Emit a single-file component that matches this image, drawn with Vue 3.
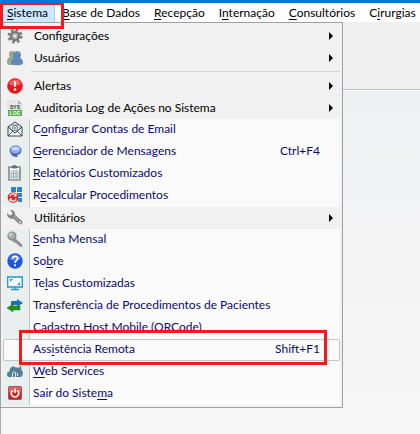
<template>
  <div class="page">
    <nav class="menubar">
      <div v-for="m in menus" :key="m.post" class="top" :class="{ open: m.open }">
        <button type="button">{{ m.pre }}<u>{{ m.key }}</u>{{ m.post }}</button>
        <span v-if="m.open" class="mark"></span>
      </div>
    </nav>

    <div class="toolbar"></div>
    <main class="workspace"></main>

    <div class="menu" role="menu">
      <template v-for="(item, i) in items" :key="i">
        <div v-if="item.sep" class="sep"></div>
        <div v-else class="row" :class="{ group: item.sub, hover: item.hover }">
          <button type="button" role="menuitem">
            <span class="icon">
              <svg v-if="item.icon === 'gear'" viewBox="0 0 16 16">
                <circle cx="8" cy="8" r="6.3" fill="none" stroke="#777" stroke-width="2.4" stroke-dasharray="2.6 2.35" />
                <circle cx="8" cy="8" r="4" fill="#ccc" stroke="#777" stroke-width="2.6" />
                <circle cx="8" cy="8" r="1.6" fill="#f4f4f4" stroke="#999" stroke-width=".6" />
              </svg>
              <svg v-else-if="item.icon === 'users'" viewBox="0 0 16 16">
                <path d="M0 13c0-4 1-5 3-6-2-3-1-6 2-6 3 0 4 3 2 6l2 8H2z" fill="#c88a91" />
                <path d="M1 14c0-4 1-5 3-6-2-3-1-6 2-6h3v13H3z" fill="#7fb58c" />
                <path d="M4 13c0-3 1-4 3-5-2-3-1-7 3-7s5 4 3 7c2 1 3 2 3 5 0 3-12 3-12 0z" fill="#6288b8" />
                <path d="M8 3c1-2 4-1 4 1" fill="none" stroke="#91aed0" />
              </svg>
              <svg v-else-if="item.icon === 'alert'" viewBox="0 0 16 16">
                <circle cx="8" cy="8" r="7.6" fill="#e8161d" stroke="#c9494d" stroke-width=".6" />
                <path d="M2 6c1-6 11-6 12 0-3 2-9 2-12 0z" fill="#ff5a5c" />
                <path d="M6.8 3h2.4l-.5 6H7.3z" fill="#fff" />
                <circle cx="8" cy="11.5" r="1.3" fill="#fff" />
              </svg>
              <svg v-else-if="item.icon === 'log'" viewBox="0 0 16 16">
                <path d="M1 0h10l4 4v6H1z" fill="#e8e8e6" stroke="#ccc" stroke-width=".6" />
                <path d="M11 0v4h4z" fill="#b8b8b8" />
                <path d="M1 10h14v6H1z" fill="#5fae57" />
                <text x="8" y="8.6" text-anchor="middle" font-size="5" font-weight="bold" fill="#333">SYS</text>
                <text x="8" y="15" text-anchor="middle" font-size="5" font-weight="bold" fill="#e9ffe4">LOG</text>
              </svg>
              <svg v-else-if="item.icon === 'mail'" viewBox="0 0 16 16">
                <path d="M1 6l7-5 7 5v9H1z" fill="#f7fafa" stroke="#39434a" />
                <path d="M3 8V4h10v4l-5 4z" fill="#fff" stroke="#58636a" stroke-width=".7" />
                <path d="M1 6l7 6 7-6M1 15l5-5M15 15l-5-5" fill="none" stroke="#39434a" stroke-width=".9" />
                <circle cx="8" cy="7" r="2.6" fill="none" stroke="#3c6f91" />
                <circle cx="8" cy="7" r=".9" fill="#3c6f91" />
              </svg>
              <svg v-else-if="item.icon === 'chat'" viewBox="0 0 16 16">
                <path d="M9 11l2 3c-4 0-6-1-7-3z" fill="#414fae" />
                <ellipse cx="8.5" cy="7.5" rx="6" ry="5" fill="#5068c8" />
                <ellipse cx="8.5" cy="7" rx="5" ry="3.6" fill="#8fa9ec" />
                <ellipse cx="8.5" cy="5.5" rx="4" ry="2" fill="#c8d8fc" />
              </svg>
              <svg v-else-if="item.icon === 'report'" viewBox="0 0 16 16">
                <path d="M2 2h11v13H2z" fill="#fff" stroke="#59636b" stroke-width="1.2" />
                <path d="M5 3V1.5h1.5c0-2 2-2 2 0H10V3z" fill="#777" stroke="#4d555c" stroke-width=".7" />
                <path d="M4 6h7v7H4zM4 8.5h7M4 11h7M6.5 6v7M9 6v7" fill="none" stroke="#8e9aa3" stroke-width=".8" />
              </svg>
              <svg v-else-if="item.icon === 'recalc'" viewBox="0 0 16 16">
                <path d="M4 0h5v5H4zM10 0h5v5h-5zM10 6h5v4h-5zM11 11h4v4h-4z" fill="#2c84cc" />
                <circle cx="6" cy="10.5" r="5.3" fill="#e0242b" />
                <path d="M3 9.5c.5-3 4-3.5 5.5-1.5M9 11.5c-.5 3-4 3.5-5.5 1.5" fill="none" stroke="#fff" stroke-width="1.3" />
                <path d="M9.5 6.5v3h-3zM2.5 14.5v-3h3z" fill="#fff" />
              </svg>
              <svg v-else-if="item.icon === 'wrench'" viewBox="0 0 16 16">
                <path d="M0 3l3 2.5 2-.8.3-2.2L3 0c3.5-.3 5.5 1.5 5 5l6.5 5.5c2.5 2.5-.5 5.5-3 3L6.5 8.5C3 9.5-.5 7 0 3z" fill="#858585" />
                <path d="M7 6l6 6" stroke="#b9b9b9" />
                <circle cx="13" cy="12.5" r=".9" fill="#eee" />
              </svg>
              <svg v-else-if="item.icon === 'key'" viewBox="0 0 16 16">
                <path d="M7 6l8 7.5.5 2.5-3-.5-1-2-1.5.2-.5-2H8L4 9z" fill="#8d8d8d" />
                <circle cx="5" cy="5" r="4.6" fill="#929292" />
                <circle cx="4.5" cy="4.5" r="3" fill="#b1b1b1" />
                <circle cx="3.5" cy="3.5" r="1" fill="#eee" />
              </svg>
              <svg v-else-if="item.icon === 'help'" viewBox="0 0 16 16">
                <circle cx="8" cy="8" r="7.7" fill="#1f56df" />
                <path d="M2 6c1-6 11-6 12 0-3 2-9 2-12 0z" fill="#4a7bf0" />
                <path d="M5.5 6c0-3.5 5.2-3.2 5.2-.4C10.7 7.5 8 7.5 8 10" fill="none" stroke="#fff" stroke-width="1.7" />
                <circle cx="8" cy="12.3" r="1.1" fill="#fff" />
              </svg>
              <svg v-else-if="item.icon === 'screen'" viewBox="0 0 16 16">
                <path d="M.7 2h14.6v10H.7z" fill="#f4fbfd" stroke="#2596bd" stroke-width="1.3" />
                <path d="M8 12v2M4 14.5h8" stroke="#2596bd" stroke-width="1.3" />
                <path d="M3 4h3L3 7zM13 10h-3l3-3z" fill="#2596bd" />
              </svg>
              <svg v-else-if="item.icon === 'transfer'" viewBox="0 0 16 16">
                <path d="M4 4h6V2l6 4-6 4V8H4z" fill="#1872c4" />
                <path d="M13 9H6V7l-6 4 6 4v-2h7z" fill="#1d9321" stroke="#126b16" stroke-width=".4" />
              </svg>
              <svg v-else-if="item.icon === 'cloud'" viewBox="0 0 16 16">
                <path d="M3 14c-4 0-4-5-.5-5.500C2 4 7 2 9 5c1-1 2-1 3 0l2-3 .5 5c2 2 2 6-1 7z" fill="#557f96" />
                <path d="M5.5 14v-4c0-1.5 3-1.5 3 0v4M10.5 10v3" fill="none" stroke="#dbe8ed" stroke-width="1" />
              </svg>
              <svg v-else-if="item.icon === 'power'" viewBox="0 0 16 16">
                <rect x="1.5" y="1.5" width="13" height="13" rx="1" fill="#c7262b" stroke="#a85357" />
                <path d="M2 2h12v5H2z" fill="#dc6265" />
                <path d="M5.5 5.5c-3 3 0 6.5 2.5 6.5s5.5-3.5 2.5-6.5M8 3.5V8" fill="none" stroke="#fff" stroke-width="1.6" />
              </svg>
            </span>
            <span class="label">{{ item.pre }}<u v-if="item.key">{{ item.key }}</u>{{ item.post }}</span>
            <span v-if="item.shortcut" class="shortcut">{{ item.shortcut }}</span>
            <span v-if="item.sub" class="arrow"></span>
          </button>
          <span v-if="item.hover" class="mark"></span>
        </div>
      </template>
    </div>
  </div>
</template>

<script setup>
const menus = [
  { pre: "", key: "S", post: "istema", open: true },
  { pre: "", key: "B", post: "ase de Dados" },
  { pre: "", key: "R", post: "ecepção" },
  { pre: "I", key: "n", post: "ternação" },
  { pre: "", key: "C", post: "onsultórios" },
  { pre: "C", key: "i", post: "rurgias" },
];

const items = [
  { icon: "gear", pre: "Configurações", sub: true },
  { icon: "users", pre: "Usuários", sub: true },
  { sep: true },
  { icon: "alert", pre: "Alertas", sub: true },
  { icon: "log", pre: "Auditoria Log de Ações no Sistema", sub: true },
  { icon: "mail", pre: "C", key: "o", post: "nfigurar Contas de Email" },
  { icon: "chat", key: "G", post: "erenciador de Mensagens", shortcut: "Ctrl+F4" },
  { icon: "report", key: "R", post: "elatórios Customizados" },
  { icon: "recalc", pre: "R", key: "e", post: "calcular Procedimentos" },
  { icon: "wrench", pre: "Utilitários", sub: true },
  { icon: "key", key: "S", post: "enha Mensal" },
  { icon: "help", pre: "So", key: "b", post: "re" },
  { icon: "screen", pre: "Te", key: "l", post: "as Customizadas" },
  { icon: "transfer", pre: "Tra", key: "n", post: "sferência de Procedimentos de Pacientes" },
  { pre: "Cadastro Host Mobile (QRCode)" },
  { pre: "Ass", key: "i", post: "stência Remota", shortcut: "Shift+F1", hover: true },
  { icon: "cloud", key: "W", post: "eb Services" },
  { icon: "power", pre: "Sair do Siste", key: "m", post: "a" },
];
</script>

<style>
body{background:#f5f5f5}
</style>

<style scoped>
.page{position:relative;min-height:100vh;display:flex;flex-direction:column;overflow:hidden;border-top:3px solid #0078d7;box-sizing:border-box;font-family:Lato,"Open Sans",sans-serif;font-size:12px;line-height:18px}
button{font:inherit;color:inherit;background:none;border:0;margin:0;padding:0;text-align:left;white-space:nowrap}
u{text-decoration:underline;text-decoration-thickness:1px;text-underline-offset:2px;text-decoration-skip-ink:none}
.menubar{display:flex;height:19px;background:#fff;color:#000}
.top{position:relative;flex:none}
.top button{height:19px;padding:0 7px}
.top.open{background:#cce8ff;box-shadow:inset -1px 0 #99d1ff}
.mark{position:absolute;z-index:3;border:3px solid #ed1c24;box-sizing:border-box;pointer-events:none}
.top .mark{top:-1px;left:0;right:-9px;height:27px}
.toolbar{height:67px;background:#f0f0f0;border-bottom:1px solid #bbb}
.workspace{flex:1;border-top:1px solid #fff;border-left:1px solid #aaa;background:linear-gradient(#eef0f4,#f4f4f4 50%,#f6f6f6)}
.menu{position:absolute;z-index:2;top:19px;left:0;min-width:343px;box-sizing:border-box;padding:2px;border:1px solid #a0a0a0;background:#f1f1f1}
.sep{height:6px;margin-left:28px;background:linear-gradient(#d5d5d5,#d5d5d5) 0 2px / 100% 1px no-repeat}
.row{position:relative;color:#0a0a6e;background:#fafafa}
.row button{display:flex;align-items:center;width:100%;height:22px;padding-right:20px}
.icon{flex:none;display:flex;align-items:center;align-self:stretch;width:27px;padding:0 0 2px 4px;box-sizing:border-box;background:#e9eeee;border-right:1px solid #c5c5c5}
.icon svg{width:16px;height:16px;font-family:"Liberation Sans",sans-serif}
.label,.shortcut{padding-bottom:2px}
.label{flex:1;padding-left:3px}
.group{color:#000;background:#f1f1f1}
.group .icon{background:none;border-color:transparent;padding-bottom:0}
.group .label{padding:0 0 0 4px}
.group button{padding-right:7px}
.arrow{border:4px solid transparent;border-left-color:#000;border-right:0}
.hover .icon{background:none;border-color:transparent}
.hover button{box-shadow:inset 0 0 0 1px #c5c5c5;border-radius:2px}
.hover .mark{top:-9px;bottom:-4px;left:16px;right:13px}
</style>
